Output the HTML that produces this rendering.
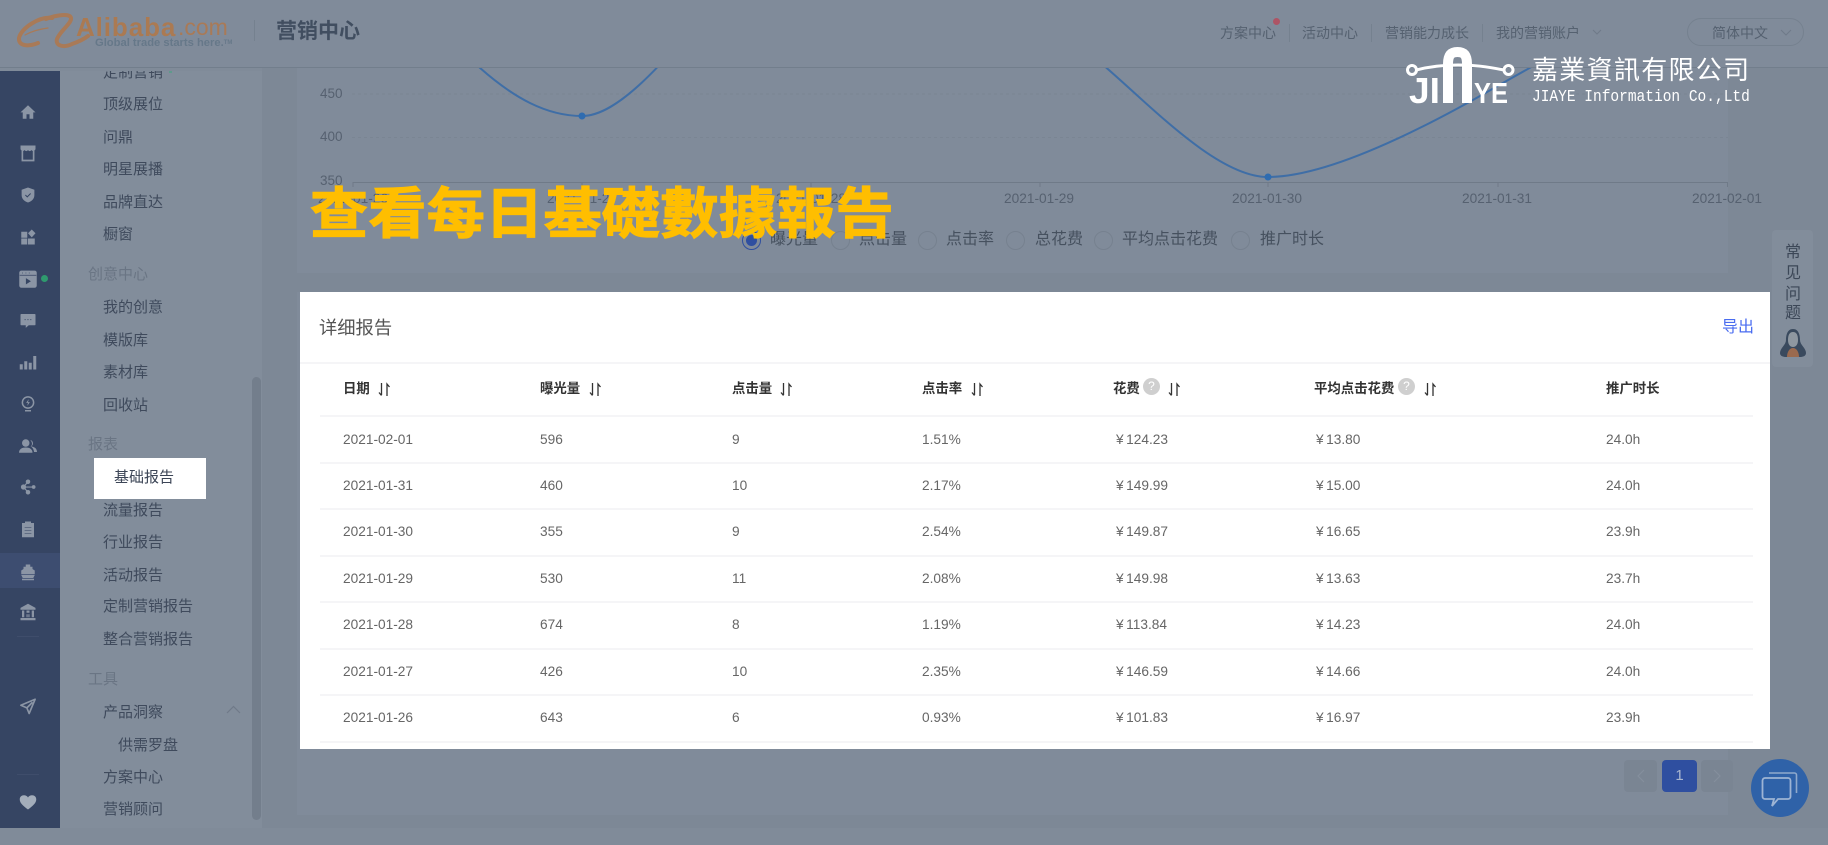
<!DOCTYPE html>
<html lang="zh"><head><meta charset="utf-8"><title>基礎數據報告</title>
<style>
html,body{margin:0;padding:0}
body{width:1828px;height:845px;overflow:hidden;position:relative;background:#808b99;font-family:"Liberation Sans","Noto Sans CJK SC",sans-serif}
.t{position:absolute;white-space:nowrap;line-height:20px}
.b{position:absolute}
#menu .t{font-size:15px;color:#3f4a5c;left:103px}
#menu .g{left:88px;color:#6a7584}
#nav .t{font-size:14px;color:#556170;top:23px}
#nav .s{position:absolute;top:24px;width:1px;height:18px;background:#75818f}
.ic{position:absolute;left:19px;width:18px;height:18px;fill:#8b95a5}
.r{position:absolute;top:231px;width:17px;height:17px;border:1px solid #76818f;border-radius:50%}
.rl{font-size:16px;color:#46515f;top:230px}
.tick{font-size:13.7px;color:#566170;top:189px;transform:translateX(-50%)}
.yl{font-size:13.500px;color:#566170;left:320px}
.th{font-size:13.400px;font-weight:700;color:#333;top:379px}
.td{font-size:13.700px;color:#666}
.td i{font-style:normal;margin-right:2.500px}
.ln{position:absolute;left:320px;width:1433px;height:2px;background:#f5f5f7}
.so{position:absolute;width:13px;height:15px;top:382px}
.q{position:absolute;top:378px;width:17px;height:17px;border-radius:50%;background:#cfcfcf;color:#fff;font-size:12px;line-height:17px;text-align:center}
</style></head><body>

<!-- main content background -->
<div class="b" style="left:262px;top:68px;width:1566px;height:760px;background:#7d8896"></div>
<div class="b" style="left:297px;top:68px;width:1431px;height:205px;background:#808b9a"></div>
<div class="b" style="left:297px;top:292px;width:1431px;height:523px;background:#808b9a"></div>

<!-- chart -->
<svg class="b" style="left:0;top:0" width="1828" height="300" viewBox="0 0 1828 300">
<g stroke="#7a8593" stroke-width="1" stroke-dasharray="3 3"><line x1="352" y1="94" x2="1728" y2="94"/><line x1="352" y1="137.500" x2="1728" y2="137.500"/></g>
<path d="M352.500 182.500H1727.500M353 182v5M582 182v5M811 182v5M1040 182v5M1268 182v5M1498 182v5M1727.500 182v5" stroke="#6f7a88" fill="none"/>
<path d="M353,-74 C440,30 505,116 582,116 C640,116 720,-20 811,-101 C880,-100 980,-20 1040,24.600 C1090,30 1195,177 1268,177 C1330,177 1430,125 1498,85.700 C1540,62 1650,0 1727,-33" fill="none" stroke="#3f6ea6" stroke-width="2"/>
<circle cx="582" cy="116" r="3.500" fill="#2f6cb0"/><circle cx="1268" cy="177" r="3.500" fill="#2f6cb0"/>
</svg>
<div class="t yl" style="top:84px">450</div>
<div class="t yl" style="top:127px">400</div>
<div class="t yl" style="top:171px">350</div>
<div class="t tick" style="left:353px">2021-01-26</div>
<div class="t tick" style="left:582px">2021-01-27</div>
<div class="t tick" style="left:811px">2021-01-28</div>
<div class="t tick" style="left:1039px">2021-01-29</div>
<div class="t tick" style="left:1267px">2021-01-30</div>
<div class="t tick" style="left:1497px">2021-01-31</div>
<div class="t tick" style="left:1727px">2021-02-01</div>

<!-- radios -->
<div class="r" style="left:742px;border-color:#2f4fa0"><div class="b" style="left:3px;top:3px;width:11px;height:11px;border-radius:50%;background:#2f4fa0"></div></div>
<div class="t rl" style="left:770px">曝光量</div>
<div class="r" style="left:831px"></div><div class="t rl" style="left:859px">点击量</div>
<div class="r" style="left:918px"></div><div class="t rl" style="left:946px">点击率</div>
<div class="r" style="left:1006px"></div><div class="t rl" style="left:1035px">总花费</div>
<div class="r" style="left:1094px"></div><div class="t rl" style="left:1122px">平均点击花费</div>
<div class="r" style="left:1231px"></div><div class="t rl" style="left:1260px">推广时长</div>

<!-- header -->
<div class="b" style="left:0;top:0;width:1828px;height:67px;background:#808b9a;border-bottom:1px solid #727e8c"></div>
<svg class="b" style="left:16px;top:13px" width="80" height="38" viewBox="0 0 80 38" fill="none" stroke="#a97a57" stroke-linecap="round">
<path d="M36 5C24 3 5 15 3 25C2 33 12 34 22 30" stroke-width="4"/>
<path d="M30 6C40 2 54 0 55 5C56 10 44 18 41 26C39 33 48 35 56 31C62 29 68 26 72 23" stroke-width="4"/>
<path d="M9 22C16 18 24 16 32 15" stroke-width="1.200"/>
</svg>
<div class="t" style="left:76px;top:14px;font-size:26px;font-weight:700;color:#ab7a52;line-height:26px;letter-spacing:.9px">Alibaba</div>
<div class="t" style="left:178px;top:14px;font-size:23px;color:#a97a57;line-height:26px">.com</div>
<div class="t" style="left:95px;top:34px;font-size:11.200px;font-weight:700;color:#667889;line-height:18px">Global trade starts here.<span style="font-size:6px;vertical-align:top">TM</span></div>
<div class="b" style="left:254px;top:20px;width:1px;height:21px;background:#75818f"></div>
<div class="t" style="left:276px;top:20px;font-size:21px;font-weight:700;color:#414e60;line-height:24px">营销中心</div>

<div id="nav">
<div class="t" style="left:1220px">方案中心</div>
<div class="b" style="left:1273px;top:18px;width:7px;height:7px;border-radius:50%;background:#ad5465"></div>
<div class="s" style="left:1289px"></div>
<div class="t" style="left:1302px">活动中心</div>
<div class="s" style="left:1371px"></div>
<div class="t" style="left:1385px">营销能力成长</div>
<div class="s" style="left:1482px"></div>
<div class="t" style="left:1496px">我的营销账户</div>
<svg class="b" style="left:1592px;top:29px" width="10" height="6"><path d="M1 1l4 4 4-4" fill="none" stroke="#6f7a89"/></svg>
<div class="b" style="left:1687px;top:18px;width:115px;height:26px;border:1px solid #75818f;border-radius:14px"></div>
<div class="t" style="left:1712px;top:23px;font-size:14px;color:#556170">简体中文</div>
<svg class="b" style="left:1780px;top:29px" width="12" height="7"><path d="M1 1l5 5 5-5" fill="none" stroke="#6f7a89"/></svg>
</div>

<!-- sidebar menu -->
<div class="b" style="left:60px;top:71px;width:202px;height:757px;background:#828d9b"></div>
<div id="menu" class="b" style="left:0;top:71px;width:262px;height:757px;overflow:hidden">
<div style="position:absolute;left:0;top:-71px;width:262px;height:845px">
<div class="t" style="top:63px">定制营销</div>
<div class="b" style="left:169px;top:71px;width:3px;height:2px;background:#5f9a8c"></div>
<div class="t" style="top:95px">顶级展位</div>
<div class="t" style="top:128px">问鼎</div>
<div class="t" style="top:160px">明星展播</div>
<div class="t" style="top:193px">品牌直达</div>
<div class="t" style="top:225px">橱窗</div>
<div class="t g" style="top:265px">创意中心</div>
<div class="t" style="top:298px">我的创意</div>
<div class="t" style="top:331px">模版库</div>
<div class="t" style="top:363px">素材库</div>
<div class="t" style="top:396px">回收站</div>
<div class="t g" style="top:435px">报表</div>
<div class="t" style="top:501px">流量报告</div>
<div class="t" style="top:533px">行业报告</div>
<div class="t" style="top:566px">活动报告</div>
<div class="t" style="top:597px">定制营销报告</div>
<div class="t" style="top:630px">整合营销报告</div>
<div class="t g" style="top:670px">工具</div>
<div class="t" style="top:703px">产品洞察</div>
<div class="t" style="top:736px;left:118px">供需罗盘</div>
<div class="t" style="top:768px">方案中心</div>
<div class="t" style="top:800px">营销顾问</div>
<svg class="b" style="left:226px;top:705px" width="15" height="9"><path d="M1 8l6.500-6.500L14 8" fill="none" stroke="#6f7a89" stroke-width="1.200"/></svg>
<div class="b" style="left:252px;top:377px;width:9px;height:443px;border-radius:5px;background:#737e8c"></div>
</div></div>
<div class="b" style="left:94px;top:458px;width:112px;height:41px;background:#fff"></div>
<div class="t" style="left:114px;top:468px;font-size:15px;color:#3c4556">基础报告</div>

<!-- dark icon rail -->
<div class="b" style="left:0;top:71px;width:60px;height:757px;background:#364563"></div>
<div class="b" style="left:0;top:553px;width:60px;height:35px;background:#3d4d70"></div>
<div class="b" style="left:17px;top:636px;width:22px;height:1px;background:#3f4d6b"></div>
<div class="b" style="left:17px;top:774px;width:22px;height:1px;background:#3f4d6b"></div>

<svg class="ic" style="top:103px" viewBox="0 0 24 24"><path d="M12 3L2 12.500h3V21h5v-6h4v6h5v-8.500h3z"/></svg>
<svg class="ic" style="top:144px" viewBox="0 0 24 24"><path d="M2 2h20v5c-1.500 3-4 3-5.500 1-1.500 2-3 2-4.500 0-1.500 2-3 2-4.500 0C6 10 3.500 10 2 7z"/><path d="M4.500 9v13h15V9" fill="none" stroke="#8b95a5" stroke-width="2.200"/></svg>
<svg class="ic" style="top:186px" viewBox="0 0 24 24"><path d="M12 2l8.500 3v7c0 5-3.500 8.500-8.500 10C7 20.500 3.500 17 3.500 12V5z"/><path d="M8.500 12l2.500 2.500 4.500-4.500" fill="none" stroke="#364563" stroke-width="1.300"/></svg>
<svg class="ic" style="top:228px" viewBox="0 0 24 24"><path d="M3 5h8v8H3zM3 14h8v8H3zM12 14h9v8h-9zM12 7l5-5 5 5-5 5.500z"/></svg>
<svg class="ic" style="top:269px;left:18px;width:20px;height:20px" viewBox="0 0 24 24"><path d="M4 2h16a2.500 2.500 0 0 1 2.500 2.500V20a2.500 2.500 0 0 1-2.500 2.500H4A2.500 2.500 0 0 1 1.500 20V4.500A2.500 2.500 0 0 1 4 2z"/><path d="M2 7.500h20" stroke="#364563" stroke-width="1"/><path d="M9.500 11l6 3.700-6 3.700z" fill="#364563"/><path d="M5 4.800h1M9 4.800h1M13 4.800h1" stroke="#364563"/></svg>
<div class="b" style="left:41px;top:275px;width:7px;height:7px;border-radius:50%;background:#2f9a6e"></div>
<svg class="ic" style="top:311px" viewBox="0 0 24 24"><path d="M3 4h18a1 1 0 0 1 1 1v13a1 1 0 0 1-1 1h-8l-4 3.500V19H3a1 1 0 0 1-1-1V5a1 1 0 0 1 1-1z"/><path d="M7.500 11.500h1.300M11.300 11.500h1.300M15.100 11.500h1.300" stroke="#364563" stroke-width="1.400"/></svg>
<svg class="ic" style="top:353px" viewBox="0 0 24 24"><path d="M1 15h4v7H1zM7 11h4v11H7zM13 13h4v9h-4zM19 4h4v18h-4z"/></svg>
<svg class="ic" style="top:395px" viewBox="0 0 24 24"><circle cx="12" cy="10" r="7.500" fill="none" stroke="#8b95a5" stroke-width="2"/><path d="M13 5.500l-3.500 5H12l-1 4 3.500-5H12zM8 20h8v2H8z"/></svg>
<svg class="ic" style="top:437px;left:18px;width:20px;height:18px" viewBox="0 0 26 24"><circle cx="10" cy="8" r="5"/><path d="M1 21c0-5 4-7 9-7s9 2 9 7z"/><path d="M16 4a4.500 4.500 0 0 1 1 8.500c4 .5 8 2.500 8 7.500h-4c0-3-2-6-4.500-7.500C19 11 19 7 16 4z"/></svg>
<svg class="ic" style="top:478px" viewBox="0 0 24 24"><circle cx="12" cy="5" r="3"/><circle cx="6" cy="12" r="3.500"/><circle cx="12" cy="19" r="3"/><circle cx="19.500" cy="12" r="2.500"/><path d="M12 5L6 12l6 7M6 12h13" fill="none" stroke="#8b95a5" stroke-width="1.500"/></svg>
<svg class="ic" style="top:520px" viewBox="0 0 24 24"><path d="M4 4h4V2h8v2h4v19H4z"/><path d="M7.500 10h9M7.500 14h9M7.500 18h9" stroke="#364563" stroke-width=".8"/></svg>
<svg class="ic" style="top:563px" viewBox="0 0 24 24"><path d="M9 2h6v3h3v3l3 2v5H3v-5l3-2V5h3zM3 16h18l-2 4H5zM4 21h16v2H4z"/></svg>
<svg class="ic" style="top:603px" viewBox="0 0 24 24"><path d="M12 1l10 5.500V9H2V6.500zM4 10h3v9H4zM10 10h4v3h-4zM17 10h3v9h-3zM10 15h1.500v4H10zM12.500 15H14v4h-1.500zM2 20h20v3H2z"/></svg>
<svg class="ic" style="top:697px" viewBox="0 0 24 24"><path d="M21.500 3L2.500 11l8 3.500 3 7.500zM10.500 14.500L18 7" fill="none" stroke="#8b95a5" stroke-width="2.200" stroke-linejoin="round"/></svg>
<svg class="ic" style="top:793px" viewBox="0 0 24 24"><path d="M12 22C5 17 1 13 1 8.500 1 5 3.500 3 6.500 3 9 3 11 4 12 6c1-2 3-3 5.500-3C20.500 3 23 5 23 8.500 23 13 19 17 12 22z" fill="#a3adba"/></svg>

<!-- white detail card -->
<div class="b" style="left:300px;top:292px;width:1470px;height:457px;background:#fff"></div>
<div class="t" style="left:319px;top:318px;font-size:18.300px;color:#555">详细报告</div>
<div class="t" style="left:1722px;top:318px;font-size:16px;color:#4a6cf0">导出</div>
<div class="b" style="left:300px;top:362px;width:1470px;height:2px;background:#f5f5f7"></div>

<div class="t th" style="left:343px">日期</div>
<div class="t th" style="left:540px">曝光量</div>
<div class="t th" style="left:732px">点击量</div>
<div class="t th" style="left:922px">点击率</div>
<div class="t th" style="left:1113px">花费</div>
<div class="q" style="left:1143px">?</div>
<div class="t th" style="left:1314px">平均点击花费</div>
<div class="q" style="left:1398px">?</div>
<div class="t th" style="left:1606px">推广时长</div>

<svg width="0" height="0" style="position:absolute"><defs><g id="sa"><path d="M3.500 1v12M1 10.500l2.500 3M9 14V2l2.500 3" fill="none" stroke="#333" stroke-width="1.300"/></g></defs></svg>
<svg class="so" style="left:378px" viewBox="0 0 13 15"><use href="#sa"/></svg>
<svg class="so" style="left:589px" viewBox="0 0 13 15"><use href="#sa"/></svg>
<svg class="so" style="left:780px" viewBox="0 0 13 15"><use href="#sa"/></svg>
<svg class="so" style="left:971px" viewBox="0 0 13 15"><use href="#sa"/></svg>
<svg class="so" style="left:1168px" viewBox="0 0 13 15"><use href="#sa"/></svg>
<svg class="so" style="left:1424px" viewBox="0 0 13 15"><use href="#sa"/></svg>

<div class="ln" style="top:415px"></div><div class="ln" style="top:462px"></div><div class="ln" style="top:508px"></div><div class="ln" style="top:555px"></div><div class="ln" style="top:601px"></div><div class="ln" style="top:648px"></div><div class="ln" style="top:694px"></div><div class="ln" style="top:741px"></div>

<div class="t td" style="left:343px;top:430px">2021-02-01</div><div class="t td" style="left:540px;top:430px">596</div><div class="t td" style="left:732px;top:430px">9</div><div class="t td" style="left:922px;top:430px">1.51%</div><div class="t td" style="left:1116px;top:430px"><i>¥</i>124.23</div><div class="t td" style="left:1316px;top:430px"><i>¥</i>13.80</div><div class="t td" style="left:1606px;top:430px">24.0h</div>
<div class="t td" style="left:343px;top:476px">2021-01-31</div><div class="t td" style="left:540px;top:476px">460</div><div class="t td" style="left:732px;top:476px">10</div><div class="t td" style="left:922px;top:476px">2.17%</div><div class="t td" style="left:1116px;top:476px"><i>¥</i>149.99</div><div class="t td" style="left:1316px;top:476px"><i>¥</i>15.00</div><div class="t td" style="left:1606px;top:476px">24.0h</div>
<div class="t td" style="left:343px;top:522px">2021-01-30</div><div class="t td" style="left:540px;top:522px">355</div><div class="t td" style="left:732px;top:522px">9</div><div class="t td" style="left:922px;top:522px">2.54%</div><div class="t td" style="left:1116px;top:522px"><i>¥</i>149.87</div><div class="t td" style="left:1316px;top:522px"><i>¥</i>16.65</div><div class="t td" style="left:1606px;top:522px">23.9h</div>
<div class="t td" style="left:343px;top:569px">2021-01-29</div><div class="t td" style="left:540px;top:569px">530</div><div class="t td" style="left:732px;top:569px">11</div><div class="t td" style="left:922px;top:569px">2.08%</div><div class="t td" style="left:1116px;top:569px"><i>¥</i>149.98</div><div class="t td" style="left:1316px;top:569px"><i>¥</i>13.63</div><div class="t td" style="left:1606px;top:569px">23.7h</div>
<div class="t td" style="left:343px;top:615px">2021-01-28</div><div class="t td" style="left:540px;top:615px">674</div><div class="t td" style="left:732px;top:615px">8</div><div class="t td" style="left:922px;top:615px">1.19%</div><div class="t td" style="left:1116px;top:615px"><i>¥</i>113.84</div><div class="t td" style="left:1316px;top:615px"><i>¥</i>14.23</div><div class="t td" style="left:1606px;top:615px">24.0h</div>
<div class="t td" style="left:343px;top:662px">2021-01-27</div><div class="t td" style="left:540px;top:662px">426</div><div class="t td" style="left:732px;top:662px">10</div><div class="t td" style="left:922px;top:662px">2.35%</div><div class="t td" style="left:1116px;top:662px"><i>¥</i>146.59</div><div class="t td" style="left:1316px;top:662px"><i>¥</i>14.66</div><div class="t td" style="left:1606px;top:662px">24.0h</div>
<div class="t td" style="left:343px;top:708px">2021-01-26</div><div class="t td" style="left:540px;top:708px">643</div><div class="t td" style="left:732px;top:708px">6</div><div class="t td" style="left:922px;top:708px">0.93%</div><div class="t td" style="left:1116px;top:708px"><i>¥</i>101.83</div><div class="t td" style="left:1316px;top:708px"><i>¥</i>16.97</div><div class="t td" style="left:1606px;top:708px">23.9h</div>

<!-- FAQ side panel -->
<div class="b" style="left:1772px;top:230px;width:41px;height:137px;background:#828d9b;border-radius:4px"></div>
<div class="t" style="left:1785px;top:243px;font-size:16px;color:#3c4757">常</div>
<div class="t" style="left:1785px;top:264px;font-size:16px;color:#3c4757">见</div>
<div class="t" style="left:1785px;top:285px;font-size:16px;color:#3c4757">问</div>
<div class="t" style="left:1785px;top:304px;font-size:16px;color:#3c4757">题</div>
<svg class="b" style="left:1778px;top:328px" width="30" height="30" viewBox="0 0 30 30">
<path d="M15 1C9 1 8 8 8 12c0 5-6 8-6 13 0 3 3 4 6 4h14c3 0 6-1 6-4 0-5-6-8-6-13 0-4-1-11-7-11z" fill="#3a4a5e"/>
<path d="M15 4c-3.500 0-5 3-5 8s2.500 7 5 7 5-2 5-7-1.500-8-5-8z" fill="#8e97a0"/>
<path d="M9 29c0-5 2.500-9 6-9s6 4 6 9z" fill="#9a6a4f"/>
</svg>

<!-- pagination -->
<div class="b" style="left:1624px;top:760px;width:33px;height:32px;background:#7a8593;border-radius:4px"></div>
<svg class="b" style="left:1636px;top:769px" width="10" height="14"><path d="M8 1L2 7l6 6" fill="none" stroke="#848f9d" stroke-width="1.200"/></svg>
<div class="b" style="left:1662px;top:760px;width:35px;height:32px;background:#2f4fa0;border-radius:4px;color:#aab6cf;font-size:15px;line-height:32px;text-align:center">1</div>
<div class="b" style="left:1701px;top:760px;width:32px;height:32px;background:#7a8593;border-radius:4px"></div>
<svg class="b" style="left:1712px;top:769px" width="10" height="14"><path d="M2 1l6 6-6 6" fill="none" stroke="#848f9d" stroke-width="1.200"/></svg>

<!-- chat -->
<div class="b" style="left:1751px;top:759px;width:58px;height:58px;border-radius:50%;background:#2f62a8"></div>
<svg class="b" style="left:1761px;top:770px" width="38" height="38" viewBox="0 0 38 38">
<path d="M8 3h25.500a2 2 0 0 1 2 2v18" fill="none" stroke="#8fa9cc" stroke-width="1.600"/>
<path d="M4 8h23a2.500 2.500 0 0 1 2.500 2.500v16a2.500 2.500 0 0 1-2.500 2.500H17l-6 7 2-7H4a2.500 2.500 0 0 1-2.500-2.500v-16A2.500 2.500 0 0 1 4 8z" fill="none" stroke="#9db4d4" stroke-width="1.800"/>
</svg>

<!-- overlay title -->
<div class="t" style="left:310px;top:178px;font-family:'Liberation Sans','Noto Sans CJK TC',sans-serif;font-size:58px;font-weight:700;line-height:70px;letter-spacing:.4px;color:#ffbe00;-webkit-text-stroke:1.200px #ffbe00;transform:scaleY(.95);transform-origin:0 100%">查看每日基礎數據報告</div>

<!-- JIAYE watermark -->
<svg class="b" style="left:1400px;top:40px" width="125" height="70" viewBox="0 0 125 70">
<path d="M48 63V24C48 15 51 12 57.500 12S67 15 67 24V63" fill="none" stroke="#fff" stroke-width="10"/>
<path d="M16 30C30 26.500 42 25 58 25s28 1.500 46 5" fill="none" stroke="#fff" stroke-width="3"/>
<circle cx="12" cy="30" r="4.500" fill="none" stroke="#fff" stroke-width="3"/>
<circle cx="108.500" cy="30" r="4.500" fill="none" stroke="#fff" stroke-width="3"/>
<text x="9" y="63" font-family="Liberation Sans" font-weight="700" font-size="36" fill="#fff" textLength="31" lengthAdjust="spacingAndGlyphs">JI</text>
<text x="74" y="63" font-family="Liberation Sans" font-weight="700" font-size="29" fill="#fff" textLength="34" lengthAdjust="spacingAndGlyphs">YE</text>
</svg>
<div class="t" style="left:1532px;top:54px;font-family:'Liberation Sans','Noto Sans CJK TC',sans-serif;font-size:26px;line-height:32px;letter-spacing:1.300px;color:#fff">嘉業資訊有限公司</div>
<div class="t" style="left:1532px;top:87px;font-family:'Liberation Mono',monospace;font-size:16.500px;line-height:20px;color:#fff;transform:scaleX(.88);transform-origin:0 50%">JIAYE Information Co.,Ltd</div>

</body></html>
